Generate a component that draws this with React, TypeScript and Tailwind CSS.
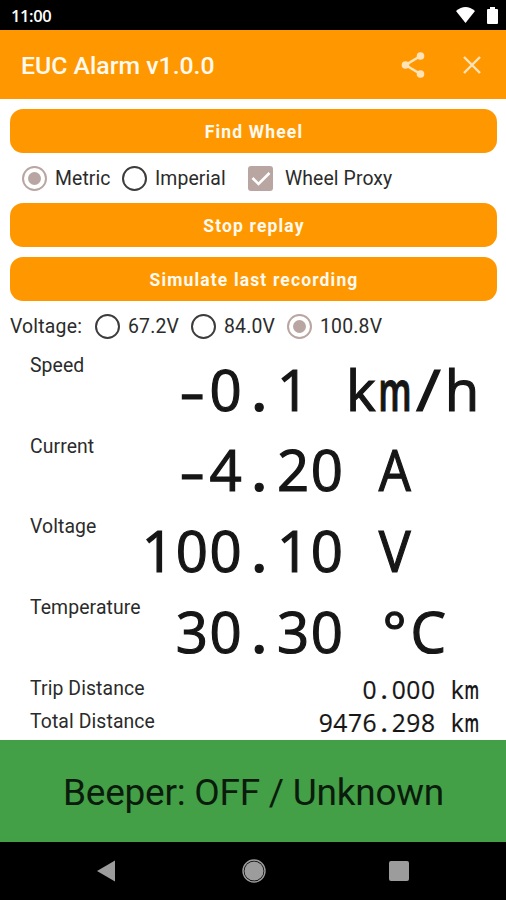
import { clsx } from "clsx";

const metrics = [
  { label: "Speed", value: "-0.1 km/h" },
  { label: "Current", value: "-4.20 A  " },
  { label: "Voltage", value: "100.10 V  " },
  { label: "Temperature", value: "30.30 °C " },
];

const distances = [
  { label: "Trip Distance", value: "0.000 km" },
  { label: "Total Distance", value: "9476.298 km" },
];

// glyphs whose proportions need adjusting to fill a fixed-width cell
const glyphStyles: Record<string, string> = {
  m: "-mx-4 scale-x-[0.62] font-semibold",
  "-": "translate-y-[0.01em] scale-x-[1.4]",
  "/": "scale-x-[1.2]",
  ".": "font-semibold",
  A: "-mx-1 scale-x-[0.9]",
  V: "-mx-1 scale-x-[0.95]",
};

// every character sits in a cell of the same width
function MonoText({ text, cell, className }: { text: string; cell: string; className: string }) {
  return (
    <span className={clsx("flex whitespace-pre font-['Open_Sans',sans-serif] font-normal tracking-normal text-[#161616]", className)}>
      {text.split("").map((char, i) => (
        <span key={i} className={clsx("flex justify-center", cell)}>
          <span className={clsx("inline-block", glyphStyles[char])}>{char}</span>
        </span>
      ))}
    </span>
  );
}

function Radio({ label, checked, className }: { label: string; checked?: boolean; className: string }) {
  return (
    <label className={clsx("flex shrink-0 items-center gap-2", className)}>
      <span
        className={clsx(
          "flex size-[25px] shrink-0 items-center justify-center rounded-full border-2",
          checked ? "border-[#b9a6a2]" : "border-[#3c3c3c]"
        )}
      >
        {checked && <span className="size-[13px] rounded-full bg-[#b9a6a2]" />}
      </span>
      <span className="pt-0.5">{label}</span>
    </label>
  );
}

function WideButton({ children }: { children: string }) {
  return (
    <button className="flex h-11 w-full shrink-0 items-center justify-center rounded-[13px] bg-[#ff9800] pl-px pt-[3px] text-[17.5px] font-bold tracking-[1.15px] text-[#fffaf0]">
      {children}
    </button>
  );
}

function StatusBar() {
  return (
    <div className="flex h-[30px] shrink-0 items-center bg-black pl-[11px] pr-2 text-white">
      <span className="pt-0.5 font-['Open_Sans',sans-serif] text-[16.5px] font-semibold tracking-[-0.4px]">11:00</span>
      <svg className="ml-auto h-4 w-[19px]" viewBox="0 0 19 16" fill="currentColor">
        <path d="M0 4Q9.5-4 19 4L9.5 16Z" />
      </svg>
      <svg className="ml-3 h-[17px] w-[11px]" viewBox="0 0 11 17" fill="currentColor">
        <path d="M3 0h5v2h2a1 1 0 0 1 1 1v13a1 1 0 0 1-1 1H1a1 1 0 0 1-1-1V3a1 1 0 0 1 1-1h2z" />
      </svg>
    </div>
  );
}

function AppBar() {
  return (
    <header className="flex h-[69px] shrink-0 items-center bg-[#ff9800] pl-[21px] pr-[25px] text-[#ffe3b8]">
      <h1 className="pt-[3px] text-[24.8px] font-medium text-[#fffaf0]">EUC Alarm v1.0.0</h1>
      <svg className="ml-auto h-[26px] w-6" viewBox="0 0 24 26">
        <path d="M19.5 4L4.5 13L19.5 22" fill="none" stroke="currentColor" strokeWidth="2.5" />
        <circle cx="19.5" cy="4" r="3.8" fill="currentColor" />
        <circle cx="4.5" cy="13" r="3.8" fill="currentColor" />
        <circle cx="19.5" cy="22" r="3.8" fill="currentColor" />
      </svg>
      <svg className="ml-[38px] size-[18px]" viewBox="0 0 18 18" fill="none" stroke="currentColor" strokeWidth="2.4">
        <path d="M1 1L17 17M17 1L1 17" />
      </svg>
    </header>
  );
}

function NavBar() {
  return (
    <nav className="flex h-[58px] shrink-0 items-center justify-between bg-black px-[97px] text-[#9c9c9c]">
      <svg className="h-[22px] w-[18px]" viewBox="0 0 18 22" fill="currentColor">
        <path d="M0 11L18 0.5V21.5Z" />
      </svg>
      <svg className="ml-1 size-6" viewBox="0 0 24 24" fill="currentColor">
        <circle cx="12" cy="12" r="11" fill="none" stroke="currentColor" strokeWidth="1.4" />
        <circle cx="12" cy="12" r="9.6" />
      </svg>
      <span className="size-5 rounded-[2px] bg-[#9c9c9c]" />
    </nav>
  );
}

export default function App() {
  return (
    <div className="flex h-[900px] w-[506px] flex-col overflow-hidden bg-white font-[Roboto,sans-serif] text-[19.4px] leading-none text-[#2b2b2b]">
      <StatusBar />
      <AppBar />

      <section className="flex shrink-0 flex-col pl-2.5 pr-[9px] pt-2.5">
        <WideButton>Find Wheel</WideButton>
        <div className="flex h-[50px] items-center pl-[12px] tracking-[0.1px]">
          <Radio label="Metric" checked className="w-[100px]" />
          <Radio label="Imperial" className="w-[126px]" />
          <label className="flex items-center gap-3">
            <span className="flex size-[25px] items-center justify-center rounded-[3px] bg-[#b9a6a2]">
              <svg className="h-[15px] w-5" viewBox="0 0 20 15" fill="none" stroke="white" strokeWidth="2.6">
                <path d="M1.5 7L7.5 13L18.5 2" />
              </svg>
            </span>
            <span className="pt-0.5">Wheel Proxy</span>
          </label>
        </div>
        <div className="flex flex-col gap-2.5">
          <WideButton>Stop replay</WideButton>
          <WideButton>Simulate last recording</WideButton>
        </div>
        <div className="flex h-[50px] items-center tracking-[0.2px]">
          <span className="w-[85px] shrink-0 pt-0.5">Voltage:</span>
          <Radio label="67.2V" className="w-24" />
          <Radio label="84.0V" className="w-24" />
          <Radio label="100.8V" checked className="w-28" />
        </div>
      </section>

      <section className="flex grow flex-col pl-[30px] pr-[27px] tracking-[0.1px]">
        {metrics.map((m) => (
          <div key={m.label} className="flex h-[80.7px] shrink-0 justify-between">
            <span className="pt-[5px]">{m.label}</span>
            <MonoText text={m.value} cell="w-[33.8px]" className="-ml-20 pt-[9.5px] text-[56.3px] [-webkit-text-stroke:1.2px_#161616]" />
          </div>
        ))}
        {distances.map((d) => (
          <div key={d.label} className="flex h-[33px] shrink-0 justify-between">
            <span className="pt-[5px]">{d.label}</span>
            <MonoText text={d.value} cell="w-[14.6px]" className="pt-1 text-[24.6px] [-webkit-text-stroke:0.2px_#161616]" />
          </div>
        ))}
      </section>

      <div className="flex h-[102px] shrink-0 items-center justify-center bg-[#43a047] pl-px pt-[3px] text-[37px] tracking-[-0.25px] text-[#0b1c0c]">
        Beeper: OFF / Unknown
      </div>
      <NavBar />
    </div>
  );
}
